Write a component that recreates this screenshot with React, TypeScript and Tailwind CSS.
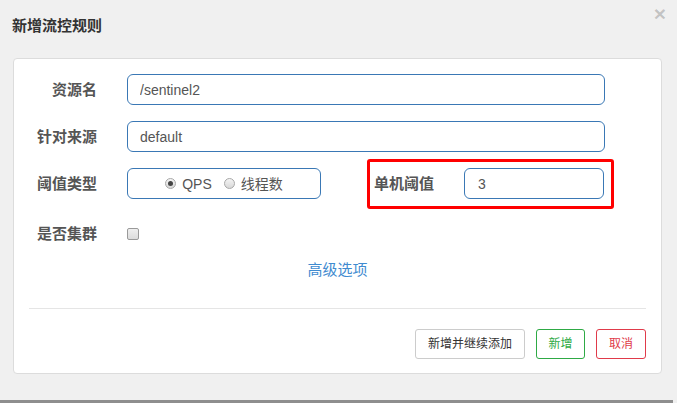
import React, { useState } from 'react';

const font = { fontFamily: '"Liberation Sans", "Noto Sans CJK SC", sans-serif' };

const Label: React.FC<{ text: string }> = ({ text }) => (
  <div className="w-[70px] shrink-0 text-right text-[15px] font-bold leading-[20px] text-[#555]">{text}</div>
);

const Radio: React.FC<{ checked: boolean; label: string; onClick: () => void }> = ({ checked, label, onClick }) => (
  <label className="flex items-center cursor-pointer" onClick={onClick}>
    <span className="flex h-[11px] w-[11px] items-center justify-center rounded-full border border-[#a8a8a8] bg-gradient-to-b from-[#f4f4f4] to-[#d8d8d8]">
      {checked && <span className="h-[5px] w-[5px] rounded-full bg-[#444]" />}
    </span>
    <span className="ml-[6px] text-[14px] leading-[18px] text-[#555]">{label}</span>
  </label>
);

export default function App() {
  const [grade, setGrade] = useState<'qps' | 'thread'>('qps');
  const [cluster, setCluster] = useState(false);

  return (
    <div className="flex h-[403px] w-full flex-col bg-[#f0f0f0]" style={font}>
      {/* header */}
      <div className="flex h-[58px] items-start justify-between">
        <div className="ml-[12px] mt-[16px] text-[15px] font-bold leading-[20px] text-[#333]">新增流控规则</div>
        <button className="mr-[11px] mt-[2px] text-[21px] font-bold leading-[24px] text-black/20">×</button>
      </div>

      {/* body */}
      <div className="ml-[13px] flex h-[316px] w-[649px] flex-col rounded-[4px] border border-[#dcdcdc] bg-white">
        <div className="flex flex-col pl-[13px] pt-[15px]">
          <div className="flex h-[31px] items-center">
            <Label text="资源名" />
            <input
              defaultValue="/sentinel2"
              className="ml-[30px] h-[31px] w-[478px] rounded-[6px] border border-[#3a78b5] px-[12px] text-[14px] text-[#555] outline-none"
            />
          </div>

          <div className="mt-[16px] flex h-[31px] items-center">
            <Label text="针对来源" />
            <input
              defaultValue="default"
              className="ml-[30px] h-[31px] w-[478px] rounded-[6px] border border-[#3a78b5] px-[12px] text-[14px] text-[#555] outline-none"
            />
          </div>

          <div className="mt-[16px] flex h-[31px] items-center">
            <Label text="阈值类型" />
            <div className="ml-[30px] flex h-[31px] w-[194px] items-center justify-center gap-[12px] rounded-[6px] border border-[#3a78b5]">
              <Radio checked={grade === 'qps'} label="QPS" onClick={() => setGrade('qps')} />
              <Radio checked={grade === 'thread'} label="线程数" onClick={() => setGrade('thread')} />
            </div>
            <div className="ml-[46px] flex h-[50px] w-[247px] shrink-0 items-center rounded-[3px] border-[3px] border-[#ff0000] pl-[4px]">
              <div className="w-[61px] shrink-0 text-[15px] font-bold leading-[20px] text-[#555]">单机阈值</div>
              <input
                defaultValue="3"
                className="ml-[29px] h-[31px] w-[140px] rounded-[6px] border border-[#3a78b5] px-[13px] text-[14px] text-[#555] outline-none"
              />
            </div>
          </div>

          <div className="mt-[19px] flex h-[31px] items-center">
            <Label text="是否集群" />
            <span
              onClick={() => setCluster(!cluster)}
              className="ml-[30px] h-[12px] w-[12px] cursor-pointer rounded-[2px] border border-[#9a9a9a] bg-gradient-to-b from-[#efefef] to-[#dcdcdc]"
            />
          </div>
        </div>

        <div className="mt-[11px] text-center text-[15px] leading-[20px] text-[#3f8bd0]">高级选项</div>

        <div className="mx-[15px] mt-[28px] border-t border-[#e5e5e5]" />

        <div className="mt-[20px] flex justify-end gap-[11px] pr-[15px]">
          <button className="h-[30px] rounded-[3px] border border-[#ccc] bg-white px-[12px] text-[12px] text-[#333]">新增并继续添加</button>
          <button className="h-[30px] w-[49px] rounded-[3px] border border-[#2eaa45] bg-white text-[12px] text-[#2eaa45]">新增</button>
          <button className="h-[30px] w-[50px] rounded-[3px] border border-[#e03a4a] bg-white text-[12px] text-[#e03a4a]">取消</button>
        </div>
      </div>

      <div className="flex-1" />
      <div className="h-[3px] w-[673px] bg-[#8e8e8e]" />
    </div>
  );
}
